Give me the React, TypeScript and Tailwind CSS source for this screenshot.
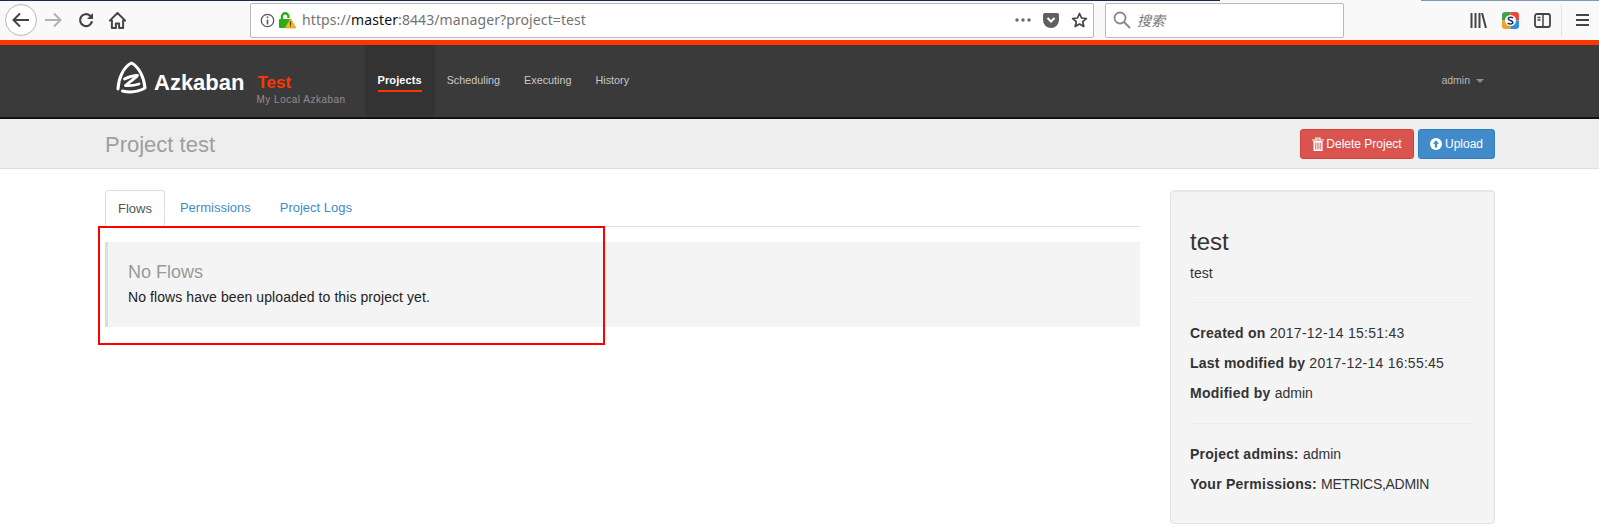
const Toolbar = () => (
  <div className="relative flex h-10 items-center bg-[#f9f9fa] font-['Noto_Sans',sans-serif]">
    {/* tab strip remnant along the very top */}
    <div className="absolute left-0 top-0 flex h-px w-full">
      <div className="w-[1220px] bg-[#1b2a49]" />
      <div className="w-[201px] bg-[#f9f9fa]" />
      <div className="flex-1 bg-[#7f98b8]" />
    </div>

    <svg width="34" height="34" viewBox="0 0 34 34" className="ml-1 shrink-0">
      <circle cx="17" cy="17" r="15.5" fill="#fff" stroke="#b8b8b8" />
      <path d="M25 17H10M16 10.5 9.5 17l6.5 6.5" fill="none" stroke="#444" strokeWidth="2" />
    </svg>
    <svg width="18" height="16" viewBox="0 0 18 16" className="ml-[6px] shrink-0">
      <path d="M1 8h15M10 1.5 16.5 8 10 14.5" fill="none" stroke="#b1b1b1" strokeWidth="2" />
    </svg>
    <svg width="16" height="16" viewBox="0 0 16 16" className="ml-4 shrink-0">
      <path d="M14 9.2A6 6 0 1 1 12 3.600L14.500 6" fill="none" stroke="#444" strokeWidth="2.200" />
      <path d="M15 1v6H9z" fill="#444" />
    </svg>
    <svg width="17" height="17" viewBox="0 0 17 17" className="ml-[15px] shrink-0">
      <path d="M8.500 1 .8 8.600h2.100V16h4v-4.500h3.200V16h4V8.600h2.100z" fill="none" stroke="#444" strokeWidth="2" strokeLinejoin="round" />
    </svg>

    <div className="ml-[124px] flex h-[35px] w-[844px] shrink-0 items-center rounded-[2px] border border-[#b9b9b9] bg-white">
      <svg width="15" height="15" viewBox="0 0 15 15" className="ml-[9px] shrink-0">
        <circle cx="7.500" cy="7.500" r="6.200" fill="none" stroke="#555" strokeWidth="1.300" />
        <path d="M7.500 6.500v5M7.500 3.500v1.600" stroke="#555" strokeWidth="1.600" />
      </svg>
      <svg width="17" height="18" viewBox="0 0 17 18" className="ml-1 shrink-0">
        <path d="M3 9V5.500a3.200 3.200 0 0 1 6.400 0V7" fill="none" stroke="#27ad1c" strokeWidth="2.400" />
        <rect x="0" y="8" width="11" height="9" rx="1" fill="#27ad1c" />
        <path d="M11.500 7.500 17 17H6z" fill="#f5b81c" stroke="#d99a0a" strokeWidth=".6" />
        <path d="M11.500 10.500v3.400M11.500 14.800v1" stroke="#333" strokeWidth="1.100" />
      </svg>
      <span className="ml-[6px] text-sm leading-none tracking-[0.1px] text-[#737373]">
        https://<span className="text-[#111]">master</span>:8443/manager?project=test
      </span>
      <div className="ml-auto flex items-center">
        <svg width="16" height="4" viewBox="0 0 16 4">
          <circle cx="2" cy="2" r="1.700" fill="#666" />
          <circle cx="8" cy="2" r="1.700" fill="#666" />
          <circle cx="14" cy="2" r="1.700" fill="#666" />
        </svg>
        <svg width="16" height="15" viewBox="0 0 16 15" className="ml-3">
          <path d="M2 0h12a2 2 0 0 1 2 2v5a8 8 0 0 1-16 0V2a2 2 0 0 1 2-2z" fill="#5f5f60" />
          <path d="m4.500 5 3.500 3.500L11.500 5" fill="none" stroke="#fff" strokeWidth="2" />
        </svg>
        <svg width="17" height="16" viewBox="0 0 17 16" className="ml-3 mr-[5px]">
          <path d="M8.500 1.500 10.500 6l4.900.5-3.700 3.200 1.100 4.800-4.300-2.500-4.300 2.500 1.100-4.800L1.600 6.500 6.500 6z" fill="none" stroke="#444" strokeWidth="1.700" strokeLinejoin="round" />
        </svg>
      </div>
    </div>

    <div className="ml-[11px] flex h-[35px] w-[239px] shrink-0 items-center rounded-[2px] border border-[#b9b9b9] bg-white">
      <svg width="18" height="18" viewBox="0 0 18 18" className="ml-[7px]">
        <circle cx="7" cy="7" r="5.500" fill="none" stroke="#8a8a8a" strokeWidth="1.800" />
        <path d="m11 11 6 6" stroke="#8a8a8a" strokeWidth="2" />
      </svg>
      <span className="ml-[6px] font-['Noto_Sans_CJK_SC',sans-serif] text-sm italic text-[#777]">搜索</span>
    </div>

    <svg width="17" height="15" viewBox="0 0 17 15" className="ml-[126px] shrink-0">
      <path d="M1.500 0v15M5.500 0v15M9.500 0v15M12 0l4 15" fill="none" stroke="#444" strokeWidth="2" />
    </svg>
    <svg width="17" height="17" viewBox="0 0 17 17" className="ml-[15px] shrink-0">
      <path d="M3 0h5.500v8.500H0V3a3 3 0 0 1 3-3z" fill="#43a047" />
      <path d="M8.500 0H14a3 3 0 0 1 3 3v5.500H8.500z" fill="#e5483f" />
      <path d="M0 8.500h8.500V17H3a3 3 0 0 1-3-3z" fill="#f0a12c" />
      <path d="M8.500 8.500H17V14a3 3 0 0 1-3 3H8.500z" fill="#2f8fdc" />
      <circle cx="8.500" cy="8.500" r="5.500" fill="#fff" />
      <path d="M11 6c-.6-1-4.600-1.500-4.800.6C6 8.700 11 8.300 10.900 10.500c-.1 2-4.300 1.700-5.200.5" fill="none" stroke="#1d3557" strokeWidth="1.500" />
    </svg>
    <svg width="17" height="15" viewBox="0 0 17 15" className="ml-[15px] shrink-0">
      <rect x="1" y="1" width="15" height="13" rx="2" fill="none" stroke="#444" strokeWidth="1.800" />
      <path d="M9 1v13M3.500 4.500h3M3.500 7h3" stroke="#444" strokeWidth="1.500" />
    </svg>
    <div className="ml-[10px] h-[31px] w-px shrink-0 bg-[#e2e2e2]" />
    <svg width="13" height="12" viewBox="0 0 13 12" className="ml-[14px] shrink-0">
      <path d="M0 1h13M0 6h13M0 11h13" stroke="#444" strokeWidth="1.800" />
    </svg>
  </div>
);

const NavBar = () => (
  <div className="box-content flex h-[72px] items-start border-t-[5px] border-b-[2px] border-t-[#ff3601] border-b-[#111] bg-[#3a3a3a] pl-[116px] pr-[115px]">
    <svg width="31" height="33" viewBox="0 0 31 33" className="mt-4 shrink-0">
      <path d="M2 28C2.500 17 7.500 6 15.500 2 23 6 28 16 29 27 22 31 13 31.500 6.500 30" fill="none" stroke="#fff" strokeWidth="3" strokeLinejoin="round" strokeLinecap="round" />
      <path d="M8.500 18c4-2 9-3.500 13-3.500-3 3.500-7.500 6-12 10 4.500.3 9 0 13.500-1.500" fill="none" stroke="#fff" strokeWidth="2.800" strokeLinecap="round" strokeLinejoin="round" />
    </svg>
    <span className="ml-[7px] mt-[26px] text-[22px] font-bold leading-6 text-white">Azkaban</span>
    <div className="ml-3 mt-[28px] flex flex-col">
      <span className="ml-px text-[17px] font-bold leading-5 text-[#ff3601]">Test</span>
      <span className="text-[10px] leading-[13px] tracking-[0.5px] text-[#8f8f8f]">My Local Azkaban</span>
    </div>
    <div className="ml-[19px] flex h-[71px] w-[70px] shrink-0 justify-center bg-[#333]">
      <span className="mt-[27px] h-[20px] border-b-2 border-[#ff3601] text-[11px] font-bold leading-4 tracking-[0.1px] text-white">Projects</span>
    </div>
    <span className="ml-3 mt-[27px] text-[10.8px] leading-4 text-[#c9c9c9]">Scheduling</span>
    <span className="ml-6 mt-[27px] text-[10.8px] leading-4 text-[#c9c9c9]">Executing</span>
    <span className="ml-6 mt-[27px] text-[10.8px] leading-4 text-[#c9c9c9]">History</span>
    <span className="ml-auto mt-[27px] text-[10.5px] leading-4 text-[#b9b9b9]">admin</span>
    <div className="ml-[6px] mt-[34px] h-0 w-0 border-x-4 border-t-4 border-x-transparent border-t-[#8d8d8d]" />
  </div>
);

const SubHeader = () => (
  <div className="flex h-[50px] items-center border-b border-[#ddd] bg-[#eee] pl-[105px] pr-[104px]">
    <h1 className="mt-[2px] text-[22px] leading-[30px] text-[#a09e9e]">Project test</h1>
    <button className="ml-auto flex h-[30px] w-[114px] items-center justify-center gap-[2px] rounded-[3px] border border-[#d43f3a] bg-[#d9534f] text-xs text-white">
      <svg width="12" height="14" viewBox="0 0 12 14">
        <path d="M0 3h12M4 3V1h4v2" fill="none" stroke="#fff" strokeWidth="1.200" />
        <path d="M1.500 4h9v10h-9z" fill="#fff" />
        <path d="M3.800 5.500v7M6 5.500v7M8.200 5.500v7" stroke="#d9534f" />
      </svg>
      Delete Project
    </button>
    <button className="ml-1 flex h-[30px] w-[77px] items-center justify-center gap-[3px] rounded-[3px] border border-[#357ebd] bg-[#428bca] text-xs text-white">
      <svg width="12" height="12" viewBox="0 0 12 12">
        <circle cx="6" cy="6" r="6" fill="#fff" />
        <path d="M6 2.300 2.800 5.800h2v3.700h2.400V5.800h2z" fill="#428bca" />
      </svg>
      Upload
    </button>
  </div>
);

const Sidebar = () => (
  <aside className="h-[334px] w-[325px] shrink-0 rounded border border-[#e3e3e3] bg-[#f4f4f4] px-[19px] text-sm tracking-[0.25px] text-[#333] shadow-[inset_0_1px_1px_rgba(0,0,0,0.05)]">
    <h3 className="mt-[35px] text-2xl leading-[32px] tracking-normal">test</h3>
    <p className="mt-[5px] leading-5 tracking-normal">test</p>
    <hr className="mt-[19px] border-[#eee]" />
    <div className="mt-[20px] flex flex-col gap-[10px]">
      <p className="leading-5"><b>Created on</b> 2017-12-14 15:51:43</p>
      <p className="leading-5"><b>Last modified by</b> 2017-12-14 16:55:45</p>
      <p className="leading-5"><b>Modified by</b> <span className="tracking-normal">admin</span></p>
    </div>
    <hr className="mt-5 border-[#eee]" />
    <div className="mt-[20px] flex flex-col gap-[10px]">
      <p className="leading-5"><b>Project admins:</b> <span className="tracking-normal">admin</span></p>
      <p className="leading-5"><b>Your Permissions:</b> <span className="tracking-[-0.3px]">METRICS,ADMIN</span></p>
    </div>
  </aside>
);

const App = () => (
  <div className="h-[531px] overflow-hidden bg-white font-['Liberation_Sans',sans-serif]">
    <Toolbar />
    <NavBar />
    <SubHeader />
    <div className="flex gap-[30px] pl-[105px] pt-[21px]">
      <main className="relative w-[1035px] shrink-0">
        <ul className="flex h-[37px] border-b border-[#ddd] text-[13px] text-[#428bca]">
          <li className="h-[37px] rounded-t border border-[#ddd] border-b-white bg-white px-3 leading-9 text-[#555]">Flows</li>
          <li className="ml-[3px] px-3 leading-9">Permissions</li>
          <li className="ml-[5px] px-3 leading-9">Project Logs</li>
        </ul>
        <div className="mt-[15px] h-[85px] border-l-[3px] border-[#ddd] bg-[#f4f4f4] pl-5 pt-5 text-sm">
          <h4 className="text-lg leading-5 text-[#999]">No Flows</h4>
          <p className="mt-[5px] leading-5 tracking-[0.08px] text-[#222]">No flows have been uploaded to this project yet.</p>
        </div>
        {/* red annotation drawn over the screenshot */}
        <div className="absolute left-[-7px] top-[36px] h-[119px] w-[507px] border-2 border-[#f00]" />
      </main>
      <Sidebar />
    </div>
  </div>
);

export default App;
